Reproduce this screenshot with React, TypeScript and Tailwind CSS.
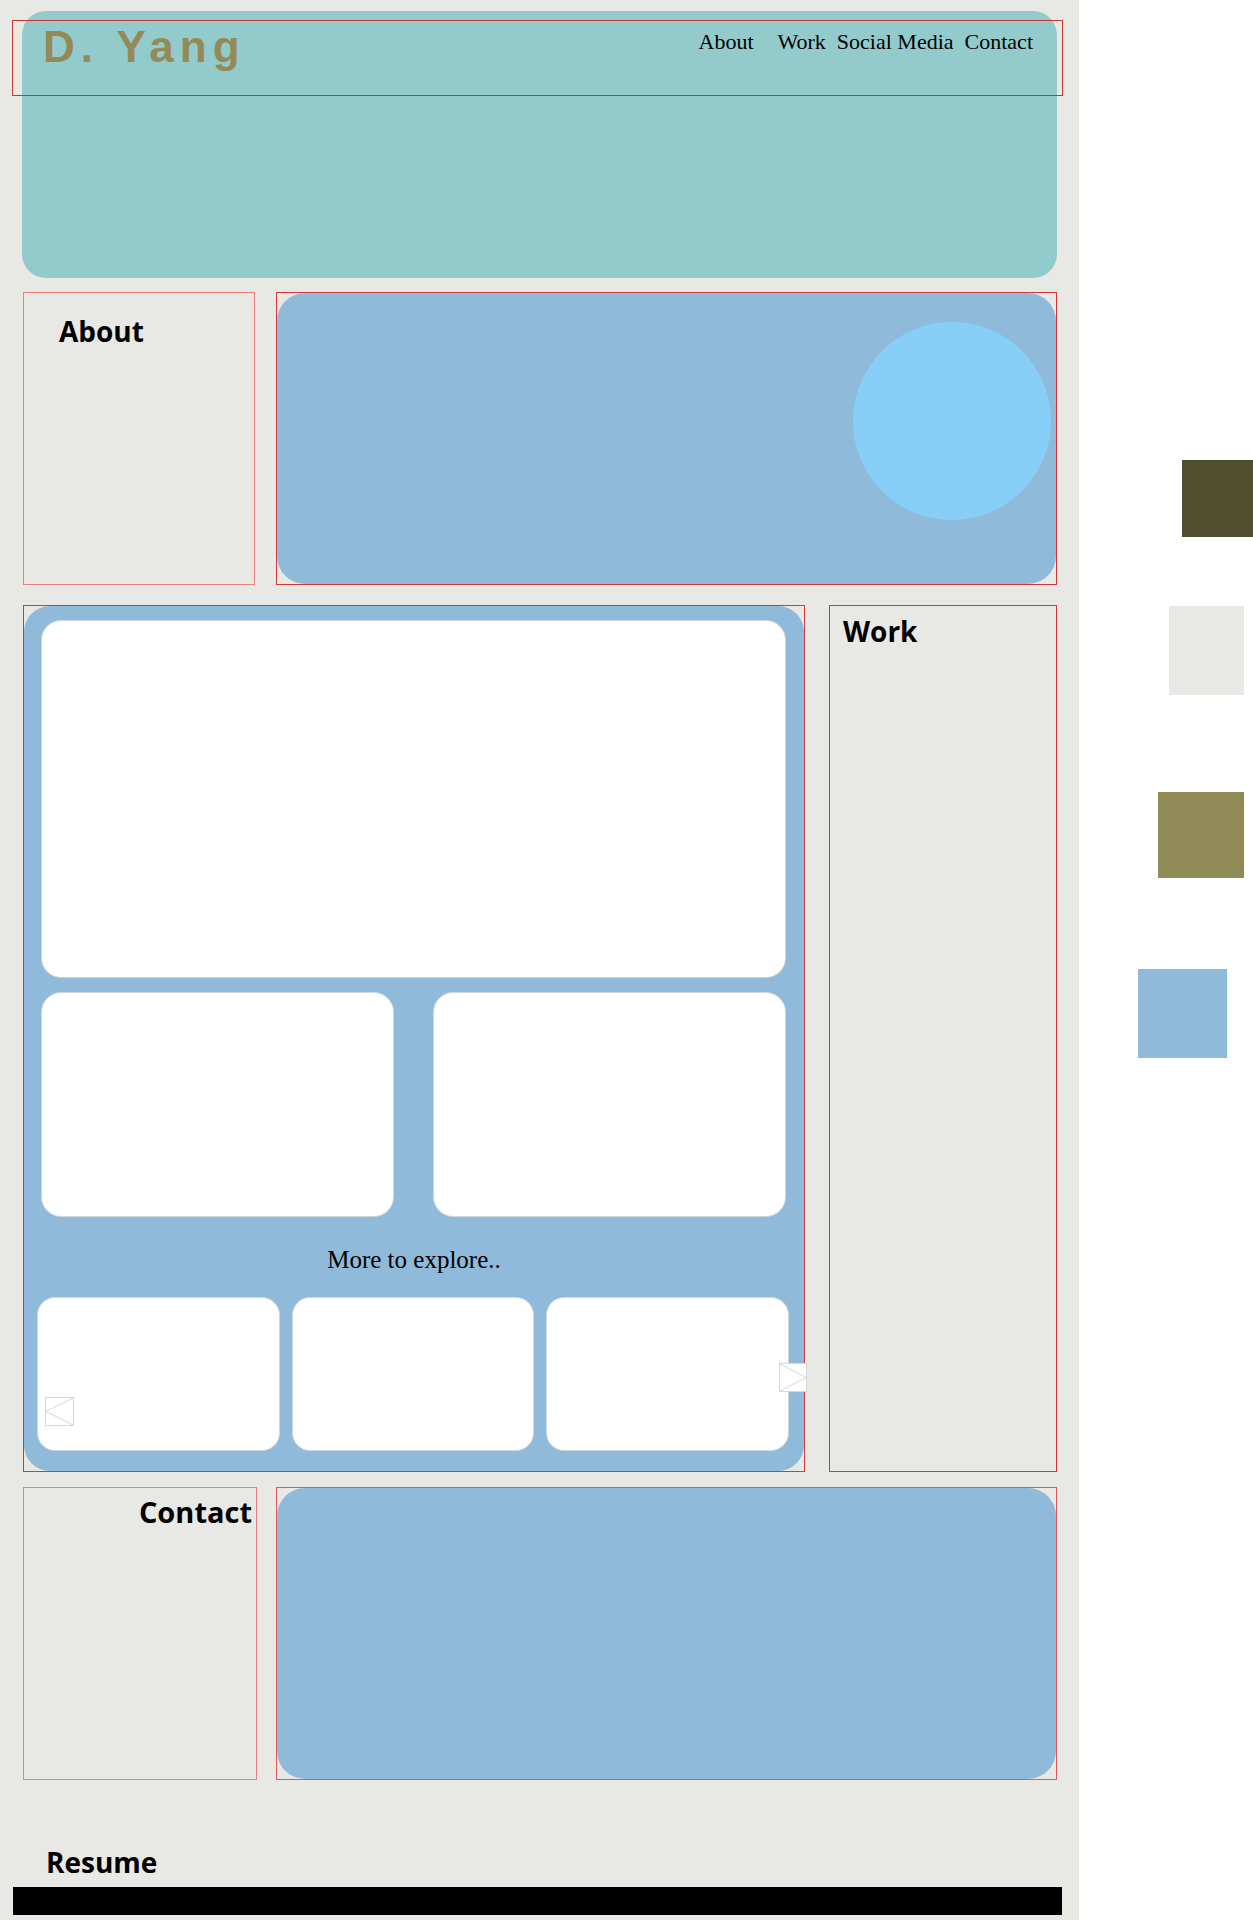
function ArrowLeft() {
    return (
        <svg width="29" height="29" viewBox="0 0 29 29" className="block">
            <rect x="0.5" y="0.5" width="28" height="28" fill="#ffffff" stroke="#d6d6d6" />
            <polyline points="28,1 1,14.5 28,28" fill="none" stroke="#d6d6d6" strokeWidth="1" />
        </svg>
    )
}

function ArrowRight() {
    return (
        <svg width="28" height="29" viewBox="0 0 28 29" className="block">
            <rect x="0.5" y="0.5" width="27" height="28" fill="#ffffff" stroke="#d6d6d6" />
            <polyline points="1,1 27,14.5 1,28" fill="none" stroke="#d6d6d6" strokeWidth="1" />
        </svg>
    )
}

const heading = "font-['Open_Sans',sans-serif] font-bold text-[28px] leading-[28px] text-black"

export default function App() {
    return (
        <div className="flex bg-white min-h-[1920px]">
            <div className="w-[1079px] shrink-0 bg-[#e8e8e4] pt-[11px] pb-[5px]">
                {/* header */}
                <header className="ml-[22px] w-[1035px] h-[267px] rounded-[24px] bg-[#93cbcd] pt-[9px]">
                    <nav className="ml-[-10px] mr-[-6px] h-[76px] border border-[#c83434] flex items-start justify-between pl-[30px] pr-[29px]">
                        <h1 className="pt-[4px] font-['Liberation_Sans',Arial,sans-serif] font-bold text-[44px] leading-[44px] tracking-[6px] text-[#948a57]">D. Yang</h1>
                        <ul className="flex pt-[10px] font-['Liberation_Serif',serif] text-[22px] leading-[22px] text-black">
                            <li className="mr-[24px]">About</li>
                            <li className="mr-[11px]">Work</li>
                            <li className="mr-[11px]">Social Media</li>
                            <li>Contact</li>
                        </ul>
                    </nav>
                </header>

                {/* about */}
                <section className="ml-[23px] mt-[14px] w-[1034px] h-[293px] flex gap-[21px]">
                    <div className="w-[232px] border border-[#ea7f7f] pt-[24px] pl-[35px]">
                        <h2 className={heading}>About</h2>
                    </div>
                    <div className="flex-1 border border-[#d43a3a]">
                        <div className="h-full rounded-[28px] bg-[#8fbad9] flex justify-end items-start pt-[29px] pr-[5px]">
                            <div className="size-[198px] rounded-full bg-[#87cff7]"></div>
                        </div>
                    </div>
                </section>

                {/* work */}
                <section className="ml-[23px] mt-[20px] w-[1034px] h-[867px] flex gap-[24px]">
                    <div className="w-[782px] border border-[#d43a3a]">
                        <div className="relative h-full rounded-[26px] bg-[#8fbad9] pt-[14px] pb-[20px] flex flex-col">
                            <div className="mx-[17px] mr-[18px] h-[358px] rounded-[20px] bg-white border border-[#cfd6dc]"></div>
                            <div className="mt-[14px] pl-[17px] pr-[18px] flex gap-[39px]">
                                <div className="flex-1 h-[225px] rounded-[20px] bg-white border border-[#cfd6dc]"></div>
                                <div className="flex-1 h-[225px] rounded-[20px] bg-white border border-[#cfd6dc]"></div>
                            </div>
                            <p className="mt-[31px] text-center font-['Liberation_Serif',serif] text-[25px] leading-[24px] text-black">More to explore..</p>
                            <div className="mt-[25px] pl-[13px] pr-[15px] flex gap-[12px]">
                                <div className="flex-1 h-[154px] rounded-[18px] bg-white border border-[#cfd6dc]"></div>
                                <div className="flex-1 h-[154px] rounded-[18px] bg-white border border-[#cfd6dc]"></div>
                                <div className="flex-1 h-[154px] rounded-[18px] bg-white border border-[#cfd6dc]"></div>
                            </div>
                            <button className="absolute left-[21px] top-[791px]"><ArrowLeft /></button>
                            <button className="absolute left-[755px] top-[757px]"><ArrowRight /></button>
                        </div>
                    </div>
                    <div className="flex-1 border border-[#d43a3a] pt-[11px] pl-[13px]">
                        <h2 className={heading}>Work</h2>
                    </div>
                </section>

                {/* contact */}
                <section className="ml-[23px] mt-[15px] w-[1034px] h-[293px] flex gap-[19px]">
                    <div className="w-[234px] border border-[#ea7f7f] pt-[10px] pr-[4px] text-right">
                        <h2 className={`${heading} text-[29px]`}>Contact</h2>
                    </div>
                    <div className="flex-1 border border-[#e05a5a]">
                        <div className="h-full rounded-[28px] bg-[#8fbad9]"></div>
                    </div>
                </section>

                <h2 className={`${heading} ml-[46px] mt-[68px]`}>Resume</h2>
                <div className="ml-[13px] mt-[11px] w-[1049px] h-[28px] bg-black"></div>
            </div>

            {/* palette */}
            <aside className="flex-1 flex flex-col items-start">
                <div className="ml-[103px] mt-[460px] w-[71px] h-[77px] bg-[#4f4f2f]"></div>
                <div className="ml-[90px] mt-[69px] w-[75px] h-[89px] bg-[#e8e8e4]"></div>
                <div className="ml-[79px] mt-[97px] w-[86px] h-[86px] bg-[#918b58]"></div>
                <div className="ml-[59px] mt-[91px] w-[89px] h-[89px] bg-[#8fbad9]"></div>
            </aside>
        </div>
    )
}
